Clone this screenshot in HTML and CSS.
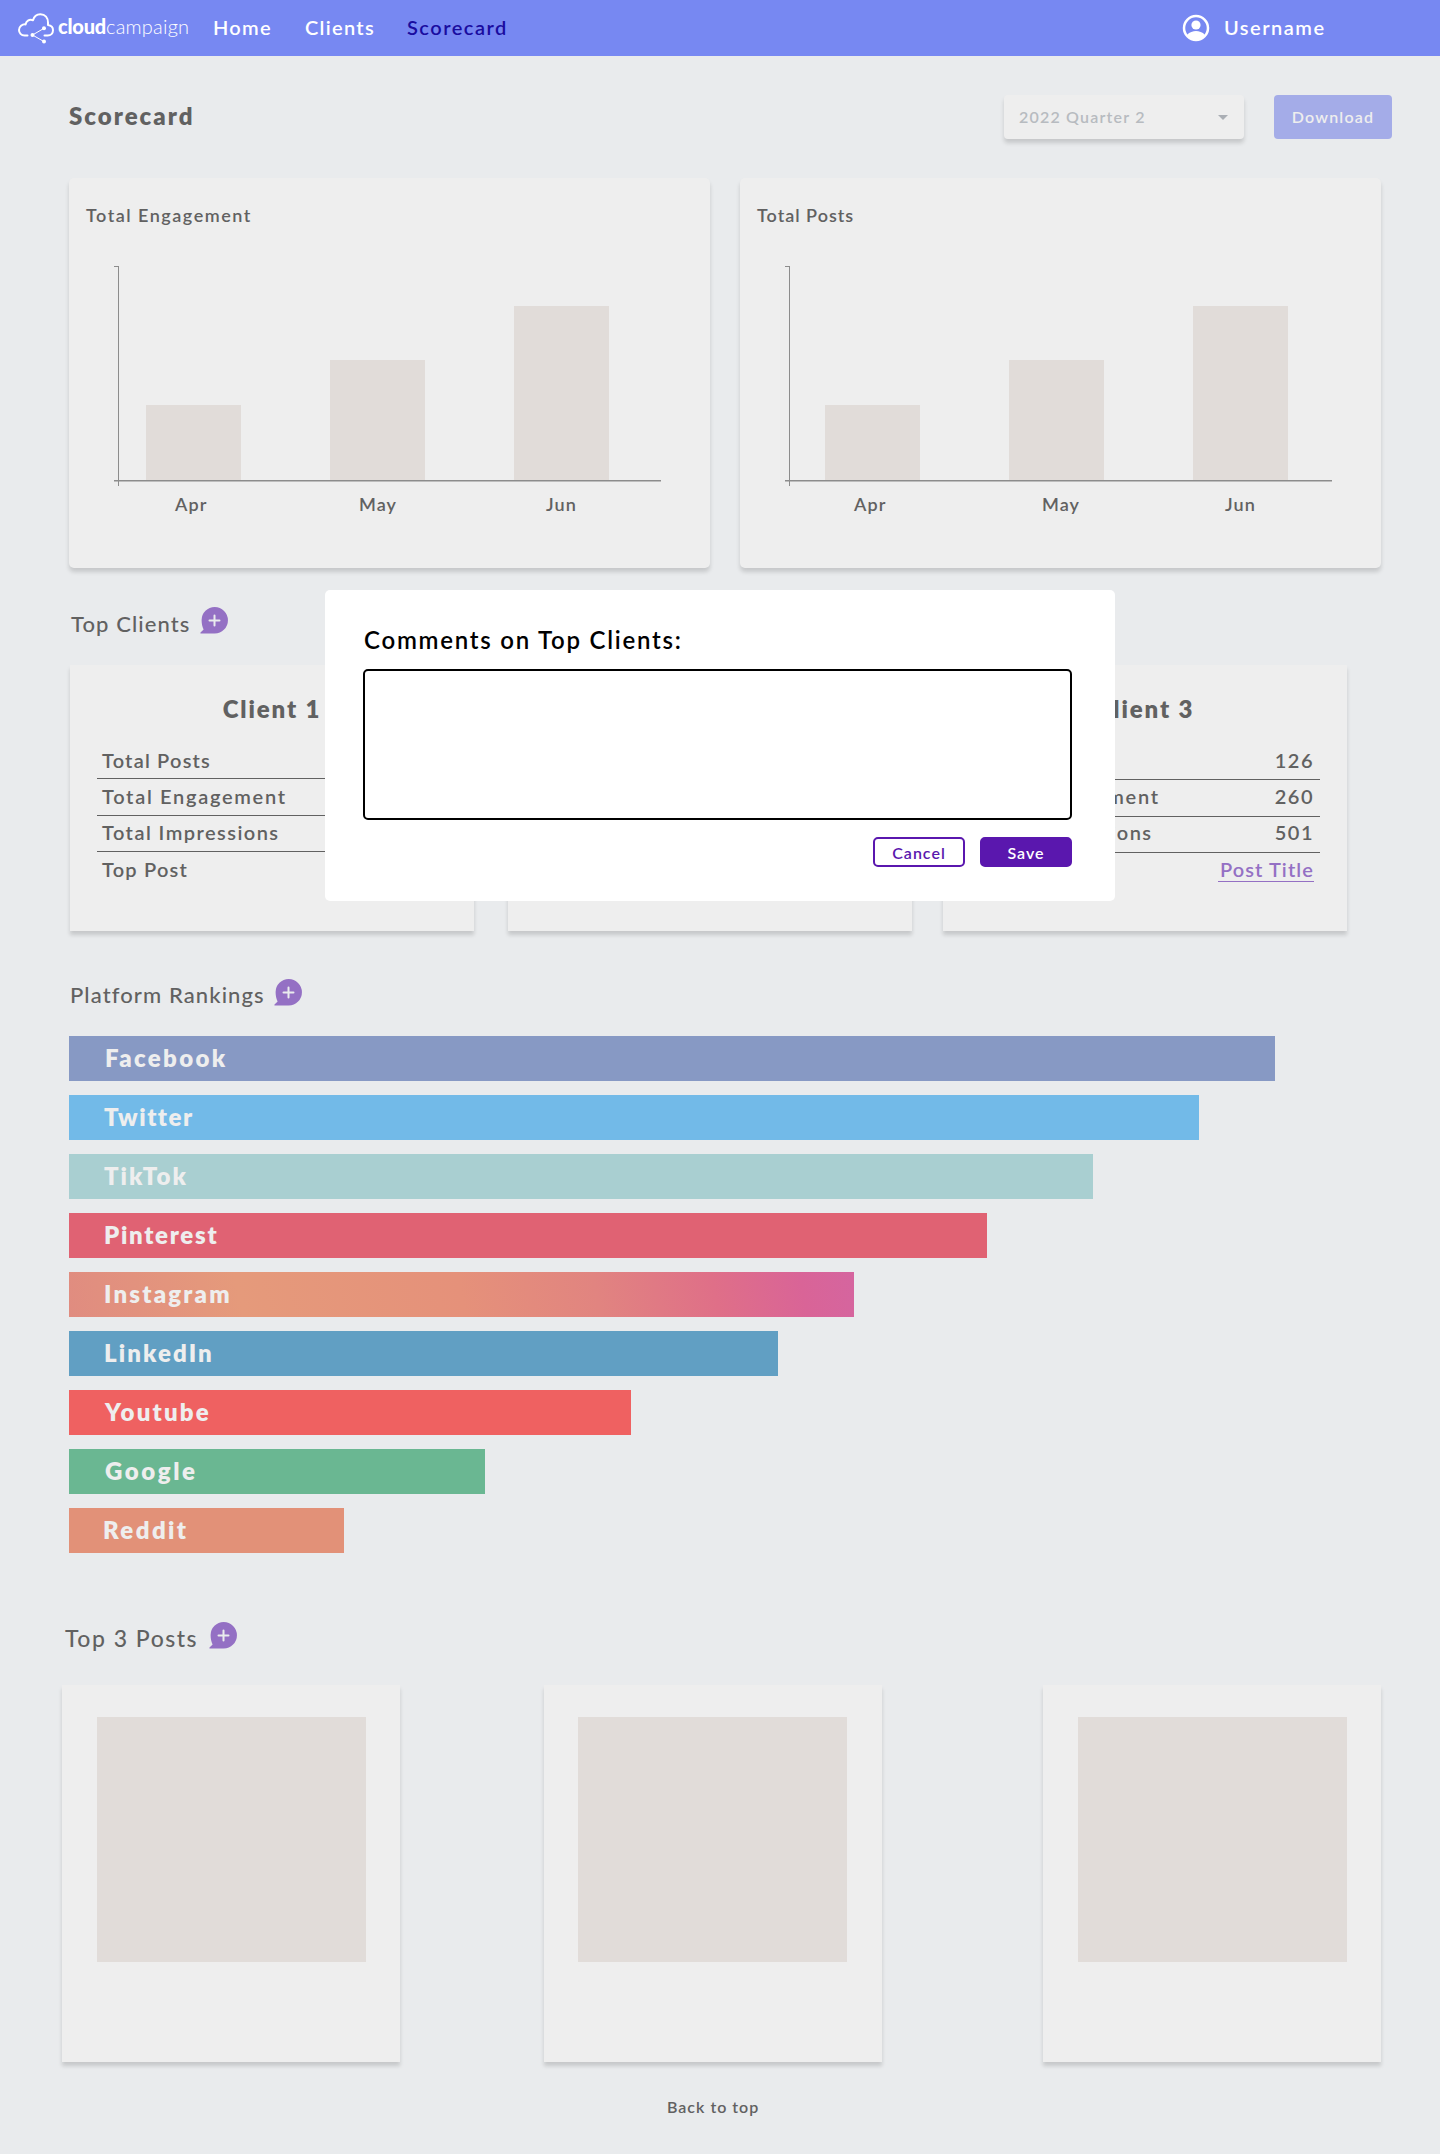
FILE: index.html
```html
<!DOCTYPE html>
<html lang="en">
<head>
<meta charset="utf-8">
<title>Scorecard - Cloud Campaign</title>
<link rel="stylesheet" href="styles.css">
</head>
<body>
<svg class="defs" width="0" height="0" aria-hidden="true">
  <symbol id="comment-add" viewBox="0 0 28 27">
    <path d="M14.700 0a13.200 13.200 0 0 1 0 26.500H1C.2 26.500.2 25.600.8 25.200l2.800-2.800C2.200 19.800 1.600 16.500 1.600 13A13.100 13.100 0 0 1 14.700 0Z" fill="#9470c4"/>
    <path d="M14.500 8.500v10M9.500 13.500h10" stroke="#e9ebed" stroke-width="2" stroke-linecap="round"/>
  </symbol>
</svg>

<header class="header">
  <a class="logo" href="#">
    <svg class="logo-mark" width="36" height="32" viewBox="0 0 36 32" fill="none" stroke="#fff">
      <path d="M9.500 22.500H6.500C3.200 22.500 1 20 1 17.100c0-3.700 3.200-6 6.600-5.700C8 8 11 6 15 7.200 16 3.500 18.800 1.200 22.400 1.200c4.800 0 7.600 3.400 7.600 8.600v2.300c3.200.4 5 2.500 5 5.200 0 3-2.200 5.200-5.300 5.200h-3.200" stroke-width="2" stroke-linecap="round" stroke-linejoin="round"/>
      <path d="M26 15.300 14.500 22 26 28.600" stroke-width="1"/>
      <g fill="#fff" stroke="none"><circle cx="26" cy="15.300" r="2"/><circle cx="14.500" cy="22" r="2"/><circle cx="26" cy="28.600" r="2"/></g>
    </svg>
    <span class="logo-text"><b>cloud</b><span>campaign</span></span>
  </a>
  <nav class="nav">
    <a class="nav-home">Home</a>
    <a class="nav-clients">Clients</a>
    <a class="nav-scorecard">Scorecard</a>
  </nav>
  <div class="user">
    <svg width="28" height="28" viewBox="0 0 28 28">
      <circle cx="14" cy="14" r="12" fill="none" stroke="#fff" stroke-width="2.500"/>
      <circle cx="14" cy="11" r="4.600" fill="#fff"/>
      <path d="M5 21c2.500-3 6-4 9-4s6.500 1 9 4c-2 3-5.500 5-9 5s-7-2-9-5Z" fill="#fff"/>
    </svg>
    <span>Username</span>
  </div>
</header>

<main class="page">
  <div class="toolbar">
    <h1>Scorecard</h1>
    <div class="select"><span>2022 Quarter 2</span><i class="caret"></i></div>
    <button class="download">Download</button>
  </div>

  <section class="charts">
    <article class="chart-card">
      <h2 class="t-engagement">Total Engagement</h2>
      <svg class="chart" width="641" height="330" viewBox="0 0 641 330">
        <g fill="#e1dcd9"><path d="M77 167h95v75H77zM261 122h95v120h-95zM445 68h95v174h-95z"/></g>
        <g fill="#8c8c8c"><path d="M49 28h1v220h-1zM45 28h4v1h-4z"/><path d="M45 242h547v1.500H45z"/></g>
        <text x="106" y="273">Apr</text><text x="290" y="273">May</text><text x="477" y="273">Jun</text>
      </svg>
    </article>
    <article class="chart-card">
      <h2 class="t-posts">Total Posts</h2>
      <svg class="chart" width="641" height="330" viewBox="0 0 641 330">
        <g fill="#e1dcd9"><path d="M85 167h95v75H85zM269 122h95v120h-95zM453 68h95v174h-95z"/></g>
        <g fill="#8c8c8c"><path d="M49 28h1v220h-1zM45 28h4v1h-4z"/><path d="M45 242h547v1.500H45z"/></g>
        <text x="114" y="273">Apr</text><text x="302" y="273">May</text><text x="485" y="273">Jun</text>
      </svg>
    </article>
  </section>

  <div class="section-head head-clients">
    <h2>Top Clients</h2><svg width="28" height="27"><use href="#comment-add"/></svg>
  </div>
  <section class="clients">
    <article class="client">
      <h3>Client 1</h3>
      <dl>
        <div><dt>Total Posts</dt></div>
        <div class="row-engagement"><dt>Total Engagement</dt></div>
        <div class="row-impressions"><dt>Total Impressions</dt></div>
        <div class="row-top"><dt>Top Post</dt></div>
      </dl>
    </article>
    <article class="client"></article>
    <article class="client client-third">
      <h3>Client 3</h3>
      <dl>
        <div><dt></dt><dd>126</dd></div>
        <div class="row-engagement"><dt>Total Engagement</dt><dd>260</dd></div>
        <div class="row-impressions"><dt>Total Impressions</dt><dd>501</dd></div>
        <div class="row-top"><dt></dt><dd><a class="post-link">Post Title</a></dd></div>
      </dl>
    </article>
  </section>

  <div class="section-head head-platforms">
    <h2>Platform Rankings</h2><svg width="28" height="27"><use href="#comment-add"/></svg>
  </div>
  <section class="ranks">
    <div class="rank facebook" style="width:1206px">Facebook</div>
    <div class="rank twitter" style="width:1130px">Twitter</div>
    <div class="rank tiktok" style="width:1024px">TikTok</div>
    <div class="rank pinterest" style="width:918px">Pinterest</div>
    <div class="rank instagram" style="width:785px">Instagram</div>
    <div class="rank linkedin" style="width:709px">LinkedIn</div>
    <div class="rank youtube" style="width:562px">Youtube</div>
    <div class="rank google" style="width:416px">Google</div>
    <div class="rank reddit" style="width:275px">Reddit</div>
  </section>

  <div class="section-head head-posts">
    <h2>Top 3 Posts</h2><svg width="28" height="27"><use href="#comment-add"/></svg>
  </div>
  <section class="posts">
    <article class="post"><div class="thumb"></div></article>
    <article class="post post-middle"><div class="thumb"></div></article>
    <article class="post"><div class="thumb"></div></article>
  </section>
  <a class="back">Back to top</a>
</main>

<div class="modal" role="dialog">
  <h2>Comments on Top Clients:</h2>
  <div class="comment-box"></div>
  <div class="actions">
    <button class="cancel">Cancel</button>
    <button class="save">Save</button>
  </div>
</div>
</body>
</html>
```

FILE: styles.css
```css
* { box-sizing: border-box; }
body {
  margin: 0;
  width: 1440px;
  height: 2154px;
  position: relative;
  background: #e9ebed;
  color: #616161;
  font-family: Lato, "Open Sans", sans-serif;
  font-weight: 600;
}
h1, h2, h3, dl, dd { margin: 0; }
button { font: inherit; border: 0; padding: 0; }
.defs { display: block; }

.header {
  height: 56px;
  background: #7788f2;
  color: #fff;
  display: flex;
  font-size: 20px;
  line-height: 55px;
  letter-spacing: 1.3px;
}
.logo { display: flex; width: 213px; padding-left: 18px; height: 56px; color: #fff; text-decoration: none; }
.logo-mark { margin-top: 13px; }
.logo-text { display: flex; margin-left: 4px; font-size: 20px; line-height: 52px; letter-spacing: -0.2px; }
.logo-text b { font-weight: 900; }
.logo-text span { font-weight: 300; letter-spacing: 0.2px; }
.nav { display: flex; }
.nav a { display: block; }
.nav-home { width: 92px; }
.nav-clients { width: 102px; }
.nav-scorecard { color: #1a0ca0; letter-spacing: 1.5px; }
.user { margin-left: auto; width: 258px; display: flex; gap: 14px; letter-spacing: 1.5px; }
.user svg { margin-top: 14px; }

.page { display: flex; flex-direction: column; }
.toolbar { display: flex; align-items: center; height: 44px; margin: 39px 48px 39px 69px; }
h1 { flex: 1; font-size: 24px; line-height: 44px; padding-bottom: 2px; font-weight: 800; letter-spacing: 2px; }
.select {
  width: 240px; height: 44px; padding: 0 16px 0 15px; margin-right: 30px;
  display: flex; align-items: center; justify-content: space-between;
  background: #eee; border-radius: 4px; color: #b7bbc0;
  box-shadow: 0 4px 4px rgba(0, 0, 0, 0.15);
  font-size: 16px; letter-spacing: 1.2px;
}
.select span { padding-bottom: 2px; }
.caret { border: 5px solid transparent; border-top-color: #aaaeb4; border-bottom: 0; }
.download {
  width: 118px; height: 44px; padding-bottom: 2px; border-radius: 4px; background: #a4ace8; color: #eee;
  font-size: 16px; letter-spacing: 1.2px;
}

.charts { display: flex; gap: 30px; padding-left: 69px; }
.chart-card {
  width: 641px; height: 390px; background: #eee; border-radius: 5px;
  box-shadow: 0 4px 4px rgba(0, 0, 0, 0.15);
}
.chart-card h2 { height: 60px; padding: 25px 0 0 17px; font-size: 18px; line-height: 24px; font-weight: 600; }
.chart-card .t-engagement { letter-spacing: 1.5px; }
.chart-card .t-posts { letter-spacing: 1px; }
.chart { display: block; }
.chart text { font-size: 18px; letter-spacing: 1.1px; fill: #616161; }

.section-head { display: flex; }
.section-head h2 { padding-top: 1px; font-size: 22px; line-height: 30px; font-weight: 500; letter-spacing: 1.1px; }
.head-clients { padding: 40px 0 0 71px; height: 97px; }
.head-clients h2 { width: 129px; }
.head-clients svg { margin-top: -1px; }
.clients { display: flex; padding-left: 70px; gap: 34px; }
.client { width: 404px; height: 266px; padding: 27px; background: #eee; box-shadow: 0 4px 4px rgba(0, 0, 0, 0.15); }
.client-third { margin-left: -3px; }
h3 { text-align: center; font-size: 24px; line-height: 34px; font-weight: 800; letter-spacing: 1.9px; }
dl { margin-top: 16px; width: 350px; font-size: 20px; letter-spacing: 1.2px; }
dl div { display: flex; justify-content: space-between; height: 37px; line-height: 36px; padding: 0 6px 0 5px; border-bottom: 1px solid #616161; }
dl .row-engagement { line-height: 35px; }
dl .row-impressions { height: 36px; line-height: 33px; }
dl .row-top { line-height: 35px; border: 0; }
.row-engagement dt { letter-spacing: 1.7px; }
.row-impressions dt { letter-spacing: 1.45px; }
dd { letter-spacing: 1.5px; }
.client-third dl { margin-top: 17px; }
.client-third div { line-height: 34px; }
.client-third .row-engagement, .client-third .row-top { line-height: 33px; }
.client-third .row-impressions { line-height: 31px; }
.post-link { display: block; height: 29px; padding: 0 0 0 2px; border-bottom: 1px solid #9470c4; color: #9470c4; letter-spacing: 1.1px; }

.head-platforms { padding: 48px 0 0 70px; height: 105px; }
.head-platforms h2 { width: 204px; }
.ranks { display: flex; flex-direction: column; gap: 14px; padding-left: 69px; }
.rank { height: 45px; padding-left: 36px; color: #eee; font-size: 24px; line-height: 43px; font-weight: 800; }
.facebook { background: #8799c4; letter-spacing: 2.3px; }
.twitter { background: #72bae8; padding-left: 35px; letter-spacing: 1.5px; }
.tiktok { background: #a9cfd1; padding-left: 35px; letter-spacing: 2.1px; }
.pinterest { background: #e06273; letter-spacing: 1.7px; padding-left: 35px; }
.instagram { background: linear-gradient(78deg, #e08c80 0%, #e59a7b 22%, #e5917a 50%, #e18480 67%, #df6f88 82%, #d96497 93%, #d5659f 100%); letter-spacing: 2.2px; padding-left: 35px; }
.linkedin { background: #619fc3; letter-spacing: 2.1px; padding-left: 35px; }
.youtube { background: #ef6161; letter-spacing: 2.2px; }
.google { background: #6ab792; letter-spacing: 2.6px; }
.reddit { background: #e29178; padding-left: 34px; letter-spacing: 2.4px; }

.head-posts { padding: 69px 0 0 65px; height: 132px; }
.head-posts h2 { width: 144px; font-size: 23px; letter-spacing: 1.5px; }
.posts { display: flex; padding-left: 62px; }
.post { width: 338px; height: 377px; padding: 32px 0 0 35px; background: #eee; box-shadow: 0 4px 4px rgba(0, 0, 0, 0.15); }
.post-middle { margin: 0 161px 0 144px; padding-left: 34px; }
.thumb { width: 269px; height: 245px; background: #e1dcd9; }
.back { align-self: flex-start; margin: 33px 0 0 667px; font-size: 16px; line-height: 24px; letter-spacing: 1px; }

.modal {
  position: absolute; left: 325px; top: 590px; width: 790px; height: 311px;
  padding: 34px 43px 0 38px; border-radius: 5px; background: #fff; color: #000;
}
.modal h2 { padding: 1px 0 0 1px; font-size: 24px; line-height: 30px; height: 45px; font-weight: 600; letter-spacing: 1.75px; }
.comment-box { height: 151px; border: 2px solid #000; border-radius: 5px; }
.actions { display: flex; justify-content: flex-end; gap: 15px; padding-top: 17px; }
.actions button { width: 92px; height: 30px; border: 2px solid #5a17ae; border-radius: 5px; font-size: 16px; line-height: 25px; letter-spacing: 1px; }
.cancel { color: #5a17ae; background: #fff; }
.save { color: #fff; background: #5a17ae; }
```
